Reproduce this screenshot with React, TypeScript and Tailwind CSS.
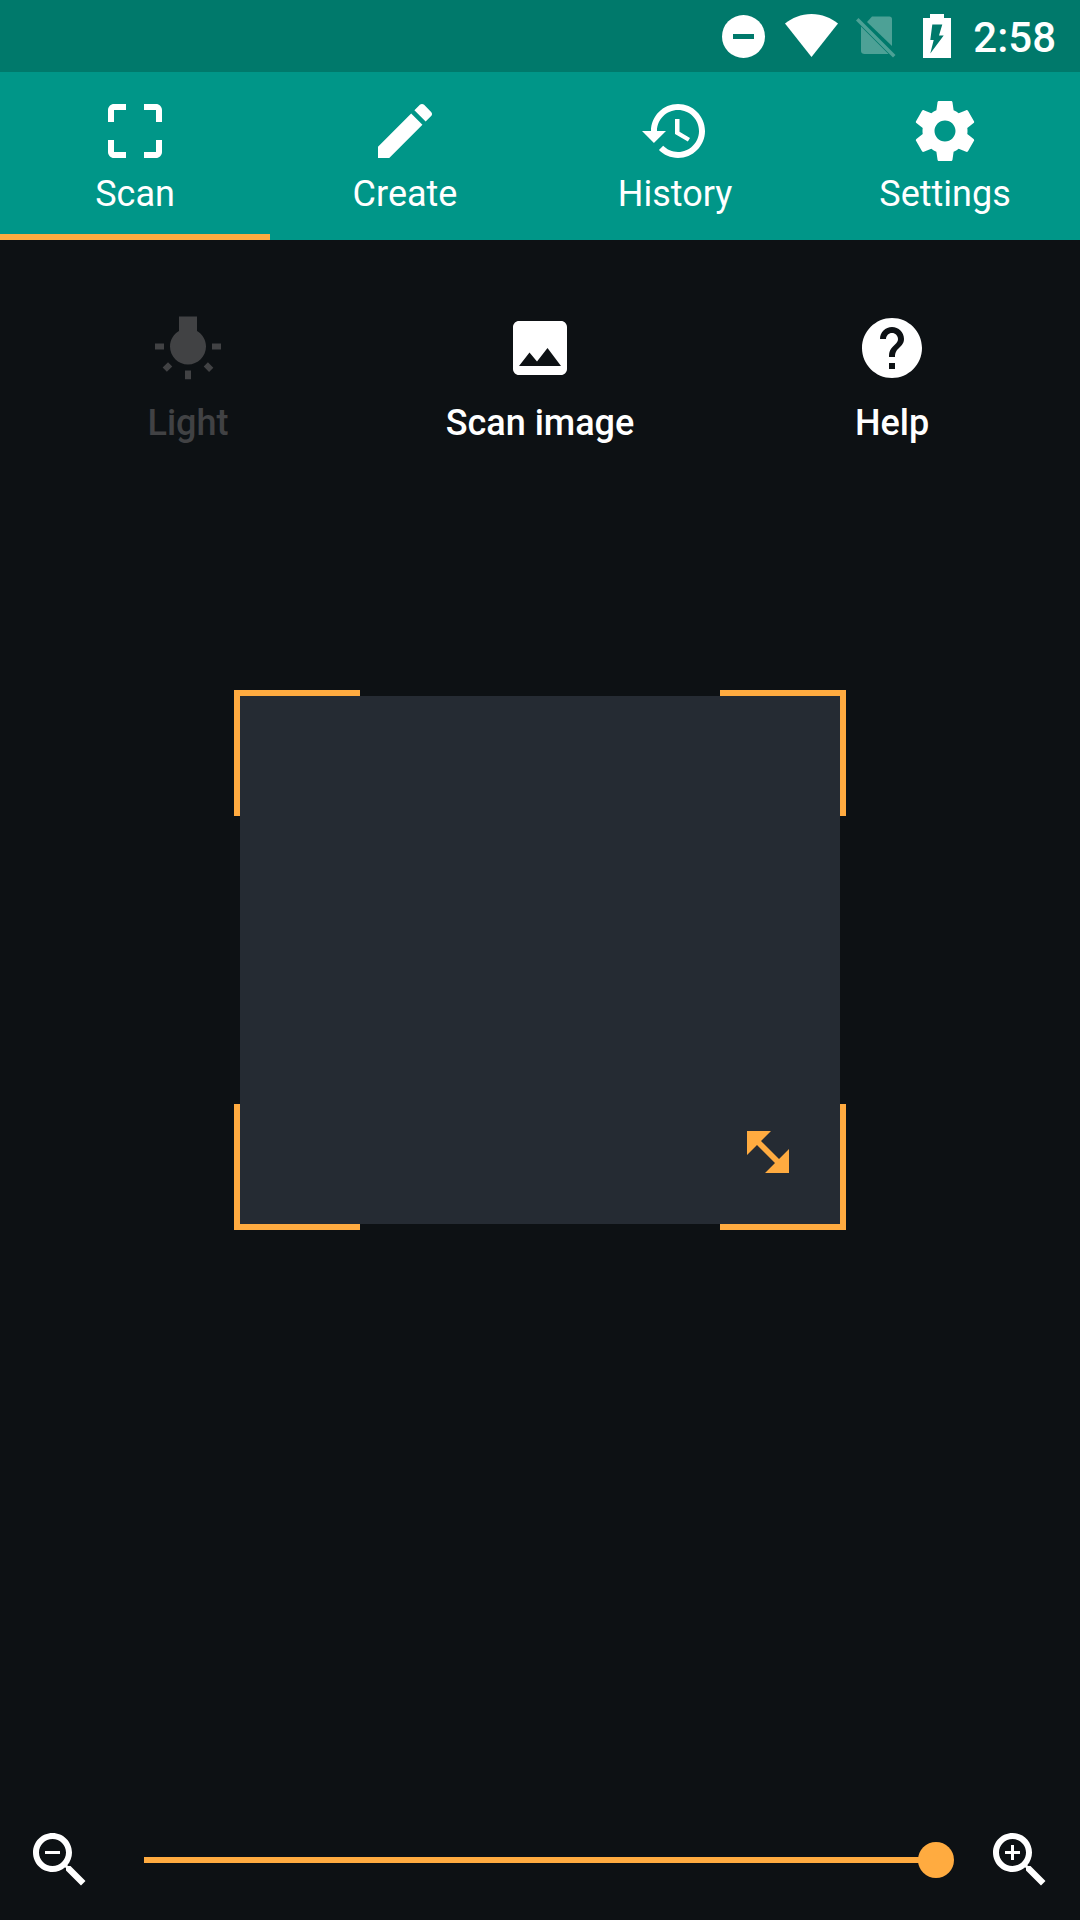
import React, { useState } from "react";

const PATHS = {
  scan: "M3 5v4h2V5h4V3H5c-1.1 0-2 .9-2 2zm2 10H3v4c0 1.1.9 2 2 2h4v-2H5v-4zm14 4h-4v2h4c1.1 0 2-.9 2-2v-4h-2v4zm0-16h-4v2h4v4h2V5c0-1.1-.9-2-2-2z",
  create:
    "M3 17.25V21h3.75L17.81 9.94l-3.75-3.75L3 17.25zM20.71 7.04c.39-.39.39-1.02 0-1.41l-2.34-2.34c-.39-.39-1.02-.39-1.41 0l-1.83 1.83 3.75 3.75 1.83-1.83z",
  history:
    "M13 3c-4.97 0-9 4.03-9 9H1l3.89 3.89.07.14L9 12H6c0-3.87 3.13-7 7-7s7 3.13 7 7-3.13 7-7 7c-1.93 0-3.68-.79-4.94-2.06l-1.42 1.42C8.27 19.99 10.51 21 13 21c4.97 0 9-4.03 9-9s-4.03-9-9-9zm-1 5v5l4.28 2.54.72-1.21-3.5-2.08V8H12z",
  settings:
    "M19.43 12.98c.04-.32.07-.64.07-.98s-.03-.66-.07-.98l2.11-1.65c.19-.15.24-.42.12-.64l-2-3.46c-.12-.22-.39-.3-.61-.22l-2.49 1c-.52-.4-1.08-.73-1.69-.98l-.38-2.65C14.46 2.18 14.25 2 14 2h-4c-.25 0-.46.18-.49.42l-.38 2.65c-.61.25-1.17.59-1.69.98l-2.49-1c-.23-.09-.49 0-.61.22l-2 3.46c-.13.22-.07.49.12.64l2.11 1.65c-.04.32-.07.65-.07.98s.03.66.07.98l-2.11 1.65c-.19.15-.24.42-.12.64l2 3.46c.12.22.39.3.61.22l2.49-1c.52.4 1.08.73 1.69.98l.38 2.65c.03.24.24.42.49.42h4c.25 0 .46-.18.49-.42l.38-2.65c.61-.25 1.17-.59 1.69-.98l2.49 1c.23.09.49 0 .61-.22l2-3.46c.12-.22.07-.49-.12-.64l-2.11-1.65zM12 15.5c-1.93 0-3.5-1.57-3.5-3.5s1.57-3.5 3.5-3.5 3.5 1.57 3.5 3.5-1.57 3.5-3.5 3.5z",
  light:
    "M3.55 18.54l1.41 1.41 1.79-1.8-1.41-1.41-1.79 1.8zM11 22.45h2V19.5h-2v2.95zM4 10.5H1v2h3v-2zm11-4.19V1.5H9v4.81C7.21 7.35 6 9.28 6 11.5c0 3.31 2.69 6 6 6s6-2.69 6-6c0-2.22-1.21-4.15-3-5.19zm5 4.19v2h3v-2h-3zm-2.76 7.66l1.79 1.8 1.41-1.41-1.8-1.79-1.4 1.4z",
  image:
    "M21 19V5c0-1.1-.9-2-2-2H5c-1.1 0-2 .9-2 2v14c0 1.1.9 2 2 2h14c1.1 0 2-.9 2-2zM8.500 13.500l2.500 3.010L14.500 12l4.500 6H5l3.500-4.500z",
  help: "M12 2C6.480 2 2 6.480 2 12s4.480 10 10 10 10-4.480 10-10S17.520 2 12 2zm1 17h-2v-2h2v2zm2.070-7.750l-.9.920C13.450 12.900 13 13.500 13 15h-2v-.5c0-1.100.450-2.100 1.170-2.830l1.240-1.260c.370-.360.590-.860.590-1.410 0-1.100-.9-2-2-2s-2 .9-2 2H8c0-2.210 1.790-4 4-4s4 1.790 4 4c0 .880-.360 1.680-.930 2.250z",
  zoomOut:
    "M15.500 14h-.79l-.28-.27C15.410 12.590 16 11.110 16 9.500 16 5.910 13.090 3 9.500 3S3 5.910 3 9.500 5.910 16 9.500 16c1.610 0 3.090-.59 4.230-1.570l.27.28v.79l5 4.990L20.490 19l-4.990-5zm-6 0C7.010 14 5 11.990 5 9.500S7.010 5 9.500 5 14 7.010 14 9.500 11.990 14 9.500 14zM7 9h5v1H7z",
  zoomIn:
    "M15.500 14h-.79l-.28-.27C15.410 12.590 16 11.110 16 9.500 16 5.910 13.090 3 9.500 3S3 5.910 3 9.500 5.910 16 9.500 16c1.610 0 3.090-.59 4.230-1.570l.27.28v.79l5 4.990L20.490 19l-4.990-5zm-6 0C7.010 14 5 11.990 5 9.500S7.010 5 9.500 5 14 7.010 14 9.500 11.990 14 9.500 14zm2.500-4h-2v2H9v-2H7V9h2V7h1v2h2v1z",
};

type IconName = keyof typeof PATHS;

function Icon({ name }: { name: IconName }) {
  return (
    <svg viewBox="0 0 24 24" className="size-[72px] shrink-0" fill="currentColor" aria-hidden="true">
      <path d={PATHS[name]} />
    </svg>
  );
}

function StatusBar() {
  return (
    <div className="flex h-[72px] shrink-0 items-center justify-end bg-[#00796b] pr-6">
      <svg viewBox="0 0 44 44" className="mr-[19px] size-11" aria-label="Do not disturb">
        <circle cx="21.500" cy="22.500" r="21.500" fill="#fff" />
        <rect x="11" y="20" width="21" height="5" fill="#00796b" />
      </svg>
      <svg viewBox="0 0 54 44" className="mr-[17px] h-11 w-[54px]" fill="#fff" aria-label="Wi-Fi">
        <path d="M0 9.500C7 4 16 0 26.500 0S46 4 53 9.500L26.500 43z" />
      </svg>
      <svg viewBox="0 0 40 44" className="mr-[27px] h-11 w-10" fill="#4da196" aria-label="No SIM">
        <path d="M11 8l5-5.500h17.500c1.500 0 2.500 1 2.500 2.500v27z" />
        <path d="M5 12.500l27.500 27.500H8.500C6.500 40 5 39 5 37z" />
        <path d="M0 6.500l2.500-2.500 37 37-2.500 2.500z" />
      </svg>
      <svg viewBox="0 0 28 44" className="mr-[22px] h-11 w-7" aria-label="Battery charging">
        <path d="M7 0h14v4h7v40H0V4h7z" fill="#fff" />
        <path d="M9.300 10.500h10L16 21.500h4.700L7.300 39.500l3.400-13.500H7.300z" fill="#00796b" />
      </svg>
      <time className="mt-1 text-[42px] leading-[48px] font-medium">2:58</time>
    </div>
  );
}

const TABS: { label: string; icon: IconName }[] = [
  { label: "Scan", icon: "scan" },
  { label: "Create", icon: "create" },
  { label: "History", icon: "history" },
  { label: "Settings", icon: "settings" },
];

function Tabs() {
  const [active, setActive] = useState("Scan");
  return (
    <nav className="grid h-[168px] shrink-0 grid-cols-4 bg-[#009688]" role="tablist">
      {TABS.map((tab) => (
        <button
          key={tab.label}
          type="button"
          role="tab"
          aria-selected={active === tab.label}
          onClick={() => setActive(tab.label)}
          className="flex flex-col items-center gap-1.5 border-b-6 border-transparent pt-[23px] aria-selected:border-[#ffab40]"
        >
          <Icon name={tab.icon} />
          <span className="text-4xl leading-[42px]">{tab.label}</span>
        </button>
      ))}
    </nav>
  );
}

const ACTIONS: { label: string; icon: IconName; disabled: boolean }[] = [
  { label: "Light", icon: "light", disabled: true },
  { label: "Scan image", icon: "image", disabled: false },
  { label: "Help", icon: "help", disabled: false },
];

function Actions() {
  return (
    <div className="grid shrink-0 grid-cols-3 px-3 pt-[72px]">
      {ACTIONS.map((action) => (
        <button
          key={action.label}
          type="button"
          disabled={action.disabled}
          className="flex flex-col items-center gap-[18px] disabled:text-[#414244]"
        >
          <Icon name={action.icon} />
          <span className="text-4xl leading-[42px] font-medium">{action.label}</span>
        </button>
      ))}
    </div>
  );
}

function Viewfinder() {
  return (
    <div className="relative mx-auto mt-[246px] h-[540px] w-[612px] p-1.5">
      <div className="size-full bg-[#252b33]" />
      <span className="absolute top-0 left-0 size-[126px] border-t-6 border-l-6 border-[#ffab40]" />
      <span className="absolute top-0 right-0 size-[126px] border-t-6 border-r-6 border-[#ffab40]" />
      <span className="absolute bottom-0 left-0 size-[126px] border-b-6 border-l-6 border-[#ffab40]" />
      <span className="absolute right-0 bottom-0 size-[126px] border-r-6 border-b-6 border-[#ffab40]" />
      <button type="button" aria-label="Resize scan area" className="absolute right-[42px] bottom-[42px]">
        <svg viewBox="0 0 72 72" className="size-[72px]" fill="#ffab40" aria-hidden="true">
          <path d="M15 15h24l-10 10 18 18 10-10v24H33l10-10-18-18-10 10z" />
        </svg>
      </button>
    </div>
  );
}

function ZoomBar() {
  const [zoom, setZoom] = useState(100);
  const step = (delta: number) => setZoom((z) => Math.min(100, Math.max(0, z + delta)));
  return (
    <div className="mt-auto flex shrink-0 items-center gap-[30px] p-6">
      <button type="button" aria-label="Zoom out" onClick={() => step(-10)}>
        <Icon name="zoomOut" />
      </button>
      <input
        type="range"
        aria-label="Zoom"
        min={0}
        max={100}
        value={zoom}
        onChange={(e) => setZoom(Number(e.target.value))}
        className="h-9 min-w-0 flex-1 appearance-none bg-transparent bg-[linear-gradient(#ffab40,#ffab40)] bg-[length:calc(100%-36px)_6px] bg-center bg-no-repeat [&::-webkit-slider-thumb]:size-9 [&::-webkit-slider-thumb]:appearance-none [&::-webkit-slider-thumb]:rounded-full [&::-webkit-slider-thumb]:bg-[#ffab40]"
      />
      <button type="button" aria-label="Zoom in" onClick={() => step(10)}>
        <Icon name="zoomIn" />
      </button>
    </div>
  );
}

export default function App() {
  return (
    <div className="flex min-h-screen flex-col bg-[#0d1114] font-[Roboto,sans-serif] text-white">
      <StatusBar />
      <Tabs />
      <Actions />
      <Viewfinder />
      <ZoomBar />
    </div>
  );
}
